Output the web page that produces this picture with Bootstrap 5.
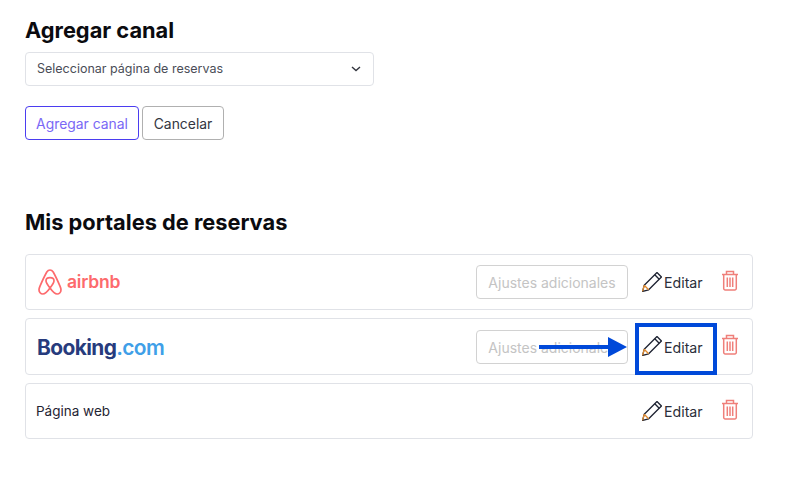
<!DOCTYPE html>
<html lang="es">
<head>
    <meta charset="UTF-8">
    <meta name="viewport" content="width=device-width, initial-scale=1.0">
    <title>Mis portales de reservas</title>
    <link href="https://cdn.jsdelivr.net/npm/bootstrap@5.3.0/dist/css/bootstrap.min.css" rel="stylesheet">
    <style>
        body {
            background-color: #fff;
            color: #1f2433;
            font-family: Inter, "Liberation Sans", sans-serif;
            font-size: 13.5px;
        }

        .page-wrap {
            width: 728px;
            margin-left: 25px;
            padding-top: 17px;
        }

        .section-title {
            font-size: 21.8px;
            font-weight: 700;
            line-height: 26px;
            color: #0b0b0f;
            margin: 0;
        }

        .channel-select {
            width: 349px;
            height: 34px;
            margin-top: 9px;
            padding: 0 12px 0 11px;
            border: 1px solid #e0e2e7;
            border-radius: 4px;
            font-size: 12.5px;
            color: #4a4d57;
        }

        .action-row {
            margin-top: 20px;
            gap: 3px;
        }

        .btn-outline {
            height: 34px;
            padding: 1px 0 0;
            font-size: 13.9px;
            line-height: 32px;
            border-radius: 4px;
            background: #fff;
        }

        .btn-add {
            width: 114px;
            border: 1px solid #4b3df0;
            color: #7a68f5;
        }

        .btn-cancel {
            width: 82px;
            border: 1px solid #b0b0b0;
            color: #33363f;
        }

        .portals-title {
            margin-top: 69px;
            margin-bottom: 19px;
        }

        .portal-row {
            height: 56px;
            margin-bottom: 8px;
            padding: 0 13px 0 10px;
            border: 1px solid #e0e2e7;
            border-radius: 4px;
        }

        .portal-row-tall {
            height: 57px;
        }

        .settings-btn {
            width: 152px;
            height: 34px;
            border: 1px solid #d2d2d2;
            border-radius: 4px;
            color: #c4c4c4;
            font-size: 14px;
            line-height: 34px;
            text-align: center;
            background: #fff;
        }

        .edit-link {
            width: 61px;
            margin-left: 14px;
            gap: 2px;
            color: #2a2e3a;
            font-size: 14.2px;
            white-space: nowrap;
        }

        .edit-link span {
            padding-top: 2px;
        }

        .trash-icon {
            margin-left: 18px;
            margin-top: -4px;
        }

        .airbnb-logo {
            gap: 5px;
            color: #fd6a6d;
            font-size: 17.5px;
            font-weight: 600;
            letter-spacing: -0.2px;
            margin-left: 2px;
        }

        .booking-logo {
            font-size: 20.9px;
            font-weight: 700;
            letter-spacing: -0.6px;
            color: #273b7d;
            margin-left: 1px;
            padding-top: 3px;
        }

        .booking-logo span {
            color: #3f9fe8;
            font-weight: 600;
        }

        .callout-box {
            position: absolute;
            left: 635px;
            top: 323px;
            width: 82px;
            height: 52px;
            border: 4px solid #0049d9;
        }

        .callout-arrow {
            position: absolute;
            left: 539px;
            top: 337px;
        }
    </style>
</head>
<body>
<div class="page-wrap">
    <h2 class="section-title">Agregar canal</h2>
    <div class="channel-select d-flex align-items-center justify-content-between">
        <span>Seleccionar página de reservas</span>
        <svg width="10" height="6" viewBox="0 0 10 6" fill="none" stroke="#33363f" stroke-width="1.400"><path d="M1 1l4 3.600L9 1"/></svg>
    </div>
    <div class="action-row d-flex">
        <button type="button" class="btn-outline btn-add">Agregar canal</button>
        <button type="button" class="btn-outline btn-cancel">Cancelar</button>
    </div>

    <h2 class="section-title portals-title">Mis portales de reservas</h2>

    <div class="portal-row d-flex align-items-center">
        <div class="airbnb-logo d-flex align-items-center">
            <svg width="24" height="26" viewBox="0 0 24 26" fill="none" stroke="#fd6a6d" stroke-width="1.700">
                <path d="M12 19C9.600 16 8 13.600 8 11.800 8 9.800 9.800 8.600 12 8.600s4 1.200 4 3.200c0 1.800-1.600 4.200-4 7.200-2.500 3.500-4.800 6-7.100 6C2.600 25 1 23 1 20.800c0-1.200.4-2.200 1-3.600C4 12.500 6.500 7 8.800 3 9.700 1.600 10.800 1 12 1s2.300.6 3.200 2c2.300 4 4.800 9.500 6.800 14.200.6 1.400 1 2.400 1 3.600 0 2.200-1.600 4.200-3.900 4.200-2.300 0-4.600-2.500-7.100-6z"/>
            </svg>
            <span>airbnb</span>
        </div>
        <div class="settings-btn ms-auto">Ajustes adicionales</div>
        <div class="edit-link d-flex align-items-center">
            <svg width="20" height="20" viewBox="1 1 18 18" fill="none" stroke="#1f2433" stroke-width="1.200" stroke-linejoin="round"><path d="M14.500 1.500l4 4L7 17l-5.500 1.500L3 13z"/><path d="M12.500 3.500l4 4"/><path d="M3 13l4 4M1.500 18.500L3 13" stroke="#e08a2e"/></svg>
            <span>Editar</span>
        </div>
        <svg class="trash-icon" width="18" height="21" viewBox="0 0 18 21" fill="none" stroke="#ef7f7a" stroke-width="1.500"><path d="M1 4.500h16M5.500 4.500V1.500h7v3M2.700 4.500v14a1.500 1.500 0 0 0 1.500 1.500h9.600a1.500 1.500 0 0 0 1.500-1.500v-14M6.300 7.500v9.500M9 7.500v9.500M11.700 7.500v9.500"/></svg>
    </div>

    <div class="portal-row portal-row-tall d-flex align-items-center">
        <div class="booking-logo">Booking<span>.com</span></div>
        <div class="settings-btn ms-auto">Ajustes adicionales</div>
        <div class="edit-link d-flex align-items-center">
            <svg width="20" height="20" viewBox="1 1 18 18" fill="none" stroke="#1f2433" stroke-width="1.200" stroke-linejoin="round"><path d="M14.500 1.500l4 4L7 17l-5.500 1.500L3 13z"/><path d="M12.500 3.500l4 4"/><path d="M3 13l4 4M1.500 18.500L3 13" stroke="#e08a2e"/></svg>
            <span>Editar</span>
        </div>
        <svg class="trash-icon" width="18" height="21" viewBox="0 0 18 21" fill="none" stroke="#ef7f7a" stroke-width="1.500"><path d="M1 4.500h16M5.500 4.500V1.500h7v3M2.700 4.500v14a1.500 1.500 0 0 0 1.500 1.500h9.600a1.500 1.500 0 0 0 1.500-1.500v-14M6.300 7.500v9.500M9 7.500v9.500M11.700 7.500v9.500"/></svg>
    </div>

    <div class="portal-row d-flex align-items-center">
        <span>Página web</span>
        <div class="edit-link d-flex align-items-center ms-auto">
            <svg width="20" height="20" viewBox="1 1 18 18" fill="none" stroke="#1f2433" stroke-width="1.200" stroke-linejoin="round"><path d="M14.500 1.500l4 4L7 17l-5.500 1.500L3 13z"/><path d="M12.500 3.500l4 4"/><path d="M3 13l4 4M1.500 18.500L3 13" stroke="#e08a2e"/></svg>
            <span>Editar</span>
        </div>
        <svg class="trash-icon" width="18" height="21" viewBox="0 0 18 21" fill="none" stroke="#ef7f7a" stroke-width="1.500"><path d="M1 4.500h16M5.500 4.500V1.500h7v3M2.700 4.500v14a1.500 1.500 0 0 0 1.500 1.500h9.600a1.500 1.500 0 0 0 1.500-1.500v-14M6.300 7.500v9.500M9 7.500v9.500M11.700 7.500v9.500"/></svg>
    </div>
</div>

<div class="callout-box"></div>
<svg class="callout-arrow" width="90" height="20" viewBox="0 0 90 20"><path d="M0 8h69V0l19 10-19 10v-8H0z" fill="#0049d9"/></svg>

<script src="https://cdn.jsdelivr.net/npm/bootstrap@5.3.0/dist/js/bootstrap.bundle.min.js"></script>
</body>
</html>
